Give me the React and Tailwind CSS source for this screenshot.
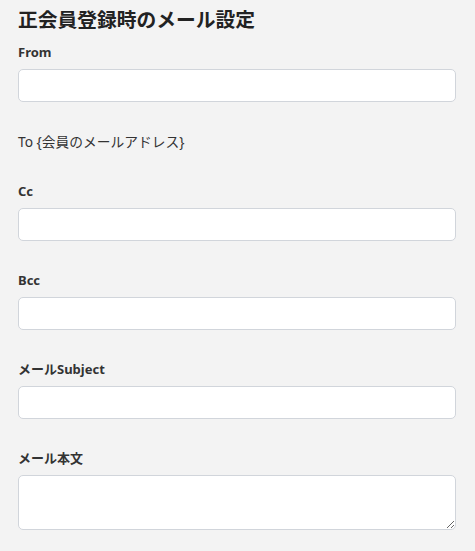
export default function App() {
  const font = { fontFamily: '"Noto Sans", "Noto Sans CJK JP", sans-serif' };
  const Label = ({ children }) => (
    <div className="h-5 text-[13px] leading-5 font-bold text-[#333]">{children}</div>
  );
  const Input = () => (
    <input
      type="text"
      className="mt-[7px] block h-[33px] w-full rounded-[5px] border border-[#d1d5db] bg-white px-2 text-sm outline-none"
    />
  );
  return (
    <div className="min-h-[551px] bg-[#f3f3f3] pl-[18px] pr-[19px] pt-[6px] text-[#333]" style={font}>
      <h1 className="h-7 text-[19.75px] leading-7 font-bold text-[#222]">正会員登録時のメール設定</h1>
      <div className="mt-2">
        <Label>From</Label>
        <Input />
      </div>
      <div className="mt-[30px] h-5 text-[13.75px] leading-5">To {"{"}会員のメールアドレス{"}"}</div>
      <div className="mt-[29px]">
        <Label>Cc</Label>
        <Input />
      </div>
      <div className="mt-[29px]">
        <Label>Bcc</Label>
        <Input />
      </div>
      <div className="mt-[29px]">
        <Label>メールSubject</Label>
        <Input />
      </div>
      <div className="mt-[29px]">
        <Label>メール本文</Label>
        <textarea className="mt-[7px] block h-[55px] w-full rounded-[5px] border border-[#d1d5db] bg-white px-2 text-sm outline-none" />
      </div>
    </div>
  );
}
